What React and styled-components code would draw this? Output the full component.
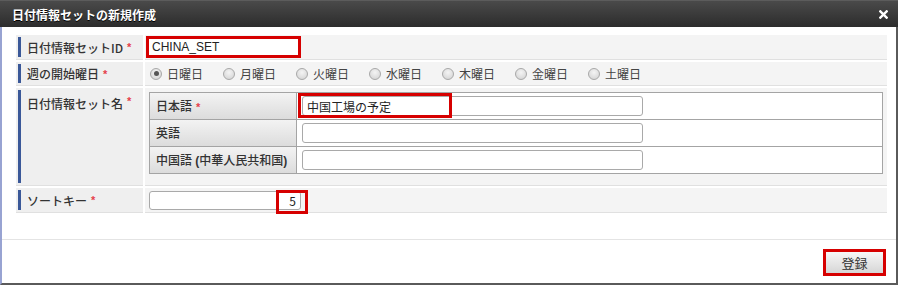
import React from "react";
import styled, { createGlobalStyle } from "styled-components";

const Global = createGlobalStyle`
  html, body { margin: 0; padding: 0; background: #fff; }
  body { font-family: "Liberation Sans", "Noto Sans CJK JP", sans-serif; font-size: 12px; color: #333; }
  * { box-sizing: border-box; }
`;

const Dialog = styled.div`
  width: 898px;
  height: 285px;
  border-left: 2px solid #98a3d2;
  border-right: 2px solid #5a5a5a;
  border-bottom: 2px solid #5a5a5a;
  display: flex;
  flex-direction: column;
  background: #fff;
`;

const Header = styled.div`
  height: 27px;
  margin-left: -2px;
  margin-right: -2px;
  padding: 0 10px 0 12px;
  display: flex;
  align-items: center;
  justify-content: space-between;
  background: linear-gradient(#4a4a4a, #2c2c2c);
  border-top: 1px solid #5c5c5c;
`;

const Title = styled.div`
  color: #fff;
  font-weight: bold;
  font-size: 12px;
  font-family: "Liberation Sans", "Noto Sans CJK JP", sans-serif;
  text-shadow: 0 1px 0 #000;
`;

const Close = styled.svg`
  width: 9px;
  height: 9px;
  margin-top: 1px;
`;

const Body = styled.div`
  padding: 8px 9px 25px 14px;
`;

const Form = styled.div`
  display: grid;
  grid-template-columns: 127px 1fr;
  column-gap: 2px;
  row-gap: 2px;
`;

const LabelCell = styled.div`
  background: #efefef;
  border-bottom: 1px solid #e0e0e0;
  padding: 2px 0 2px 2px;
  display: flex;
  min-height: ${(p) => p.$h}px;
`;

const LabelBar = styled.div`
  flex: 1;
  border-left: 3px solid #3a5898;
  padding: ${(p) => (p.$top ? "5px 0 0 6px" : "0 0 0 6px")};
  display: flex;
  align-items: ${(p) => (p.$top ? "flex-start" : "center")};
  font-family: "Noto Sans CJK JP", sans-serif;
  font-weight: 500;
  font-size: 12px;
  color: #333;
  white-space: nowrap;
`;

const Req = styled.span`
  color: #e5404b;
  margin-left: 4px;
  font-family: "Liberation Sans", sans-serif;
  font-size: 11px;
  font-weight: bold;
`;

const ValueCell = styled.div`
  background: #f4f4f4;
  border-bottom: 1px solid #e0e0e0;
  display: flex;
  align-items: ${(p) => (p.$top ? "flex-start" : "center")};
  padding: ${(p) => p.$pad || "0"};
  min-height: ${(p) => p.$h}px;
`;

const IdInput = styled.div`
  width: 155px;
  height: 22px;
  border: 3px solid #d60000;
  background: #fff;
  padding-left: 3px;
  display: flex;
  align-items: center;
  font-family: "Liberation Sans", sans-serif;
  font-size: 12px;
  color: #222;
`;

const Radios = styled.div`
  display: flex;
  align-items: center;
`;

const RadioItem = styled.label`
  display: flex;
  align-items: center;
  width: 73px;
  font-family: "Noto Sans CJK JP", sans-serif;
  font-size: 12px;
  color: #444;
`;

const RadioDot = styled.span`
  width: 12px;
  height: 12px;
  border-radius: 50%;
  border: 1px solid #a8a8a8;
  background: radial-gradient(circle at 50% 35%, #f4f4f4, #d0d0d0);
  margin-right: 5px;
  display: flex;
  align-items: center;
  justify-content: center;
  &::after {
    content: "";
    width: 5px;
    height: 5px;
    border-radius: 50%;
    background: ${(p) => (p.$on ? "#555" : "transparent")};
  }
`;

const Inner = styled.div`
  width: 734px;
  display: grid;
  grid-template-columns: 147px 1fr;
  border: 1px solid #a4a4a4;
  border-bottom: none;
`;

const InnerLabel = styled.div`
  height: 27px;
  border-bottom: 1px solid #a4a4a4;
  border-right: 1px solid #a4a4a4;
  background: linear-gradient(#f3f3f3, #dcdcdc);
  padding: 4px 0 0 6px;
  font-family: "Liberation Sans", "Noto Sans CJK JP", sans-serif;
  font-weight: 500;
  font-size: 12px;
  color: #333;
  white-space: nowrap;
`;

const Paren = styled.span`
  font-weight: bold;
`;

const InnerValue = styled.div`
  height: 27px;
  border-bottom: 1px solid #a4a4a4;
  background: #fff;
  display: flex;
  align-items: center;
  padding-left: 5px;
`;

const FieldWrap = styled.div`
  position: relative;
  display: flex;
`;

const TextBox = styled.div`
  width: ${(p) => p.$w}px;
  height: ${(p) => p.$h || 20}px;
  border: 1px solid #a9a9a9;
  border-radius: 3px;
  background: #fff;
  display: flex;
  align-items: center;
  justify-content: ${(p) => (p.$right ? "flex-end" : "flex-start")};
  padding: 0 4px;
  font-family: "Noto Sans CJK JP", "Liberation Sans", sans-serif;
  font-size: 12px;
  color: #222;
`;

const Mark = styled.div`
  position: absolute;
  border: 3px solid #d60000;
  pointer-events: none;
`;

const Footer = styled.div`
  margin-top: auto;
  border-top: 1px solid #e4e4e4;
  padding: 9px 10px 7px 0;
  display: flex;
  justify-content: flex-end;
`;

const Button = styled.button`
  width: 63px;
  height: 27px;
  border: 3px solid #d60000;
  background: linear-gradient(#f7f7f7, #d6d6d6);
  font-family: "Noto Sans CJK JP", sans-serif;
  font-size: 13px;
  color: #333;
  padding: 0;
  cursor: pointer;
`;

const days = ["日曜日", "月曜日", "火曜日", "水曜日", "木曜日", "金曜日", "土曜日"];

export default function App() {
  return (
    <>
      <Global />
      <Dialog>
        <Header>
          <Title>日付情報セットの新規作成</Title>
          <Close viewBox="0 0 10 10">
            <path d="M1.5 1.5 L8.5 8.5 M8.5 1.5 L1.5 8.5" stroke="#fff" strokeWidth="2.6" strokeLinecap="square" />
          </Close>
        </Header>
        <Body>
          <Form>
            <LabelCell $h={25}>
              <LabelBar>日付情報セットID<Req>*</Req></LabelBar>
            </LabelCell>
            <ValueCell $h={25} $pad="0 0 0 1px">
              <IdInput>CHINA_SET</IdInput>
            </ValueCell>

            <LabelCell $h={24}>
              <LabelBar>週の開始曜日<Req>*</Req></LabelBar>
            </LabelCell>
            <ValueCell $h={24} $pad="0 0 0 5px">
              <Radios>
                {days.map((d, i) => (
                  <RadioItem key={d}>
                    <RadioDot $on={i === 0} />
                    {d}
                  </RadioItem>
                ))}
              </Radios>
            </ValueCell>

            <LabelCell $h={98}>
              <LabelBar $top>日付情報セット名<Req>*</Req></LabelBar>
            </LabelCell>
            <ValueCell $h={98} $top $pad="4px 0 0 4px">
              <Inner>
                <InnerLabel>日本語<Req>*</Req></InnerLabel>
                <InnerValue>
                  <FieldWrap>
                    <TextBox $w={341}>中国工場の予定</TextBox>
                    <Mark style={{ left: -4, top: -3, width: 154, height: 25 }} />
                  </FieldWrap>
                </InnerValue>
                <InnerLabel>英語</InnerLabel>
                <InnerValue>
                  <TextBox $w={341} />
                </InnerValue>
                <InnerLabel>中国語 <Paren>(</Paren>中華人民共和国<Paren>)</Paren></InnerLabel>
                <InnerValue>
                  <TextBox $w={341} />
                </InnerValue>
              </Inner>
            </ValueCell>

            <LabelCell $h={25}>
              <LabelBar>ソートキー<Req>*</Req></LabelBar>
            </LabelCell>
            <ValueCell $h={25} $pad="0 0 0 4px">
              <FieldWrap>
                <TextBox $w={152} $h={19} $right>5</TextBox>
                <Mark style={{ left: 127, top: -1, width: 32, height: 24 }} />
              </FieldWrap>
            </ValueCell>
          </Form>
        </Body>
        <Footer>
          <Button>登録</Button>
        </Footer>
      </Dialog>
    </>
  );
}
